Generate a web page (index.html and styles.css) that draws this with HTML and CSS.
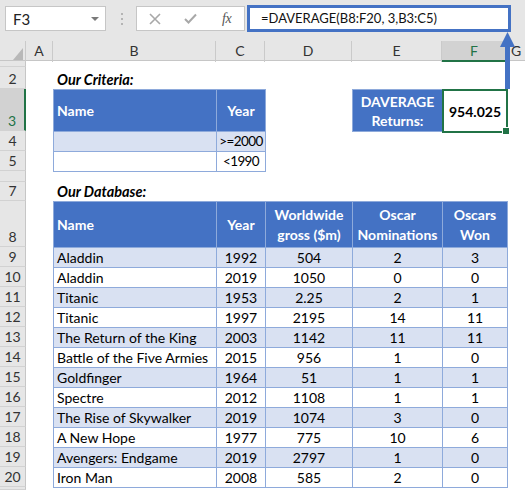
FILE: index.html
```html
<!DOCTYPE html>
<html>
<head>
<meta charset="utf-8">
<link rel="stylesheet" href="styles.css">
</head>
<body>
<div class="app">
  <div class="toolbar">
    <div class="namebox"><span>F3</span><span class="dd"></span></div>
    <div class="dots"><i></i><i></i><i></i></div>
    <div class="fxbox">
      <svg class="ico-x" width="12" height="12" viewBox="0 0 12 12"><path d="M1 1 L11 11 M11 1 L1 11" stroke="#a8a8a8" stroke-width="1.6" fill="none"/></svg>
      <svg class="ico-v" width="13" height="11" viewBox="0 0 13 11"><path d="M1 6 L4.5 9.5 L12 1.5" stroke="#a8a8a8" stroke-width="2" fill="none"/></svg>
      <span class="fx">fx</span>
    </div>
    <div class="formula">=DAVERAGE(B8:F20, 3,B3:C5)</div>
  </div>

  <div class="colhead">
    <div class="ch corner"><span class="tri"></span></div>
    <div class="ch">A</div>
    <div class="ch">B</div>
    <div class="ch">C</div>
    <div class="ch">D</div>
    <div class="ch">E</div>
    <div class="ch sel">F</div>
    <div class="ch last">G</div>
  </div>

  <div class="sheet">
    <div class="rh"></div>
    <div class="rh">2</div>
    <div class="rh selr">3</div>
    <div class="rh">4</div>
    <div class="rh">5</div>
    <div class="rh"></div>
    <div class="rh">7</div>
    <div class="rh">8</div>
    <div class="rh">9</div>
    <div class="rh">10</div>
    <div class="rh">11</div>
    <div class="rh">12</div>
    <div class="rh">13</div>
    <div class="rh">14</div>
    <div class="rh">15</div>
    <div class="rh">16</div>
    <div class="rh">17</div>
    <div class="rh">18</div>
    <div class="rh">19</div>
    <div class="rh">20</div>
    <div class="rh"></div>

    <div class="label crit-label">Our Criteria:</div>

    <div class="crit">
      <div class="hd left">Name</div>
      <div class="hd">Year</div>
      <div class="c band"></div>
      <div class="c band num tight">&gt;=2000</div>
      <div class="c"></div>
      <div class="c num tight">&lt;1990</div>
    </div>

    <div class="dav-label">DAVERAGE<br>Returns:</div>
    <div class="dav-result">954.025<span class="handle"></span></div>

    <div class="label db-label">Our Database:</div>

    <div class="db">
      <div class="hd left">Name</div>
      <div class="hd">Year</div>
      <div class="hd">Worldwide<br>gross ($m)</div>
      <div class="hd">Oscar<br>Nominations</div>
      <div class="hd">Oscars<br>Won</div>

      <div class="r band"><div class="c">Aladdin</div><div class="c num">1992</div><div class="c num">504</div><div class="c num">2</div><div class="c num">3</div></div>
      <div class="r"><div class="c">Aladdin</div><div class="c num">2019</div><div class="c num">1050</div><div class="c num">0</div><div class="c num">0</div></div>
      <div class="r band"><div class="c">Titanic</div><div class="c num">1953</div><div class="c num">2.25</div><div class="c num">2</div><div class="c num">1</div></div>
      <div class="r"><div class="c">Titanic</div><div class="c num">1997</div><div class="c num">2195</div><div class="c num">14</div><div class="c num">11</div></div>
      <div class="r band"><div class="c">The Return of the King</div><div class="c num">2003</div><div class="c num">1142</div><div class="c num">11</div><div class="c num">11</div></div>
      <div class="r"><div class="c">Battle of the Five Armies</div><div class="c num">2015</div><div class="c num">956</div><div class="c num">1</div><div class="c num">0</div></div>
      <div class="r band"><div class="c">Goldfinger</div><div class="c num">1964</div><div class="c num">51</div><div class="c num">1</div><div class="c num">1</div></div>
      <div class="r"><div class="c">Spectre</div><div class="c num">2012</div><div class="c num">1108</div><div class="c num">1</div><div class="c num">1</div></div>
      <div class="r band"><div class="c">The Rise of Skywalker</div><div class="c num">2019</div><div class="c num">1074</div><div class="c num">3</div><div class="c num">0</div></div>
      <div class="r"><div class="c">A New Hope</div><div class="c num">1977</div><div class="c num">775</div><div class="c num">10</div><div class="c num">6</div></div>
      <div class="r band"><div class="c">Avengers: Endgame</div><div class="c num">2019</div><div class="c num">2797</div><div class="c num">1</div><div class="c num">0</div></div>
      <div class="r"><div class="c">Iron Man</div><div class="c num">2008</div><div class="c num">585</div><div class="c num">2</div><div class="c num">0</div></div>
    </div>
  </div>

  <svg class="arrow" width="15" height="57" viewBox="0 0 15 57">
    <polygon points="7.5,0 0,15 15,15" fill="#4472c4"/>
    <rect x="5" y="14" width="5" height="43" fill="#4472c4"/>
  </svg>
</div>
</body>
</html>
```

FILE: styles.css
```css
html, body {
  margin: 0;
  padding: 0;
  background: #ffffff;
}

body {
  font-family: Lato, "Liberation Sans", sans-serif;
  color: #000;
}

.app {
  position: relative;
  width: 525px;
  height: 490px;
  overflow: hidden;
  background: #fff;
}

/* ---------- toolbar ---------- */
.toolbar {
  height: 41px;
  background: #e6e6e6;
  display: flex;
  align-items: flex-start;
}

.namebox {
  box-sizing: border-box;
  margin: 6px 0 0 5px;
  width: 101px;
  height: 25px;
  background: #fff;
  border: 1px solid #c6c6c6;
  display: flex;
  align-items: center;
  justify-content: space-between;
  padding: 0 6px 0 7px;
  font-size: 15px;
  color: #222;
}

.dd {
  width: 0;
  height: 0;
  border-left: 4px solid transparent;
  border-right: 4px solid transparent;
  border-top: 4px solid #7a7a7a;
}

.dots {
  margin: 13px 0 0 15px;
  display: flex;
  flex-direction: column;
  gap: 3px;
}

.dots i {
  display: block;
  width: 2px;
  height: 2px;
  background: #b4b4b4;
}

.fxbox {
  box-sizing: border-box;
  margin: 6px 0 0 13px;
  width: 109px;
  height: 25px;
  background: #fff;
  border: 1px solid #c6c6c6;
  display: flex;
  align-items: center;
  padding-left: 12px;
}

.ico-x { margin-right: 23px; }
.ico-v { margin-right: 25px; }

.fx {
  font-family: "Liberation Serif", serif;
  font-style: italic;
  font-size: 14px;
  color: #555;
  letter-spacing: -0.5px;
}

.formula {
  box-sizing: border-box;
  margin: 5px 0 0 2px;
  width: 264px;
  height: 27px;
  border: 3px solid #4472c4;
  background: #fff;
  padding-left: 11px;
  font-size: 13px;
  line-height: 20px;
  color: #111;
}

/* ---------- column headers ---------- */
.colhead {
  display: grid;
  grid-template-columns: 26px 27px 163px 49px 87px 90px 65px 1fr;
  height: 20px;
  background: #e6e6e6;
  box-sizing: border-box;
  border-bottom: 1px solid #c6c6c6;
}

.ch {
  box-sizing: border-box;
  border-right: 1px solid #cacaca;
  text-align: center;
  font-size: 14px;
  line-height: 19px;
  color: #333;
}

.ch.last { border-right: none; }

.corner {
  position: relative;
}

.tri {
  position: absolute;
  right: 2px;
  bottom: 2px;
  width: 0;
  height: 0;
  border-left: 10px solid transparent;
  border-bottom: 12px solid #b8b8b8;
}

.ch.sel {
  background: #d2d2d2;
  color: #217346;
  border-bottom: 2px solid #217346;
}

/* ---------- sheet ---------- */
.sheet {
  display: grid;
  grid-template-columns: 26px 27px 163px 49px 87px 90px 65px 1fr;
  grid-template-rows: 6px 22px 42px 20px 20px 11px 19px 46px repeat(12, 20px) 1fr;
  height: 429px;
}

.rh {
  grid-column: 1;
  box-sizing: border-box;
  background: #e6e6e6;
  border-right: 1px solid #c6c6c6;
  border-bottom: 1px solid #d2d2d2;
  display: flex;
  align-items: flex-end;
  justify-content: center;
  overflow: hidden;
  font-size: 14px;
  line-height: 18px;
  padding-bottom: 0;
  color: #333;
}

.rh.selr {
  background: #d2d2d2;
  color: #217346;
  border-right: 2px solid #217346;
}

.label {
  font-weight: bold;
  font-style: italic;
  font-size: 14.5px;
  padding-left: 4px;
  display: flex;
  align-items: flex-end;
  line-height: 18px;
  padding-bottom: 0;
  white-space: nowrap;
}

.crit-label { grid-column: 3; grid-row: 2; }
.db-label { grid-column: 3; grid-row: 7; }

/* tables */
.crit, .db {
  display: grid;
  background: #8eaadb;
  gap: 1px;
  padding: 1px;
  box-sizing: border-box;
  align-self: start;
  justify-self: start;
  font-size: 14px;
}

.crit {
  grid-column: 3 / 5;
  grid-row: 3 / 6;
  width: 213px;
  height: 83px;
  grid-template-columns: 162px 48px;
  grid-template-rows: 41px 19px 19px;
}

.db {
  grid-column: 3 / 8;
  grid-row: 8 / 21;
  width: 455px;
  height: 287px;
  grid-template-columns: 162px 48px 86px 89px 64px;
  grid-template-rows: 45px repeat(12, 19px);
}

.hd {
  background: #4472c4;
  color: #fff;
  font-weight: bold;
  display: flex;
  align-items: center;
  justify-content: center;
  text-align: center;
  line-height: 20px;
}

.hd.left {
  justify-content: flex-start;
  padding-left: 3px;
}

.r { display: contents; }

.c {
  background: #fff;
  display: flex;
  align-items: center;
  padding-left: 3px;
  line-height: 19px;
  white-space: nowrap;
  overflow: hidden;
}

.c.band, .r.band > .c {
  background: #d9e1f2;
}

.c.num {
  justify-content: center;
  padding-left: 0;
}

.c.tight {
  letter-spacing: -0.6px;
  font-size: 13.5px;
}

.dav-label {
  grid-column: 6;
  grid-row: 3;
  box-sizing: border-box;
  width: 91px;
  height: 43px;
  background: #4472c4;
  border: 1px solid #8eaadb;
  color: #fff;
  font-weight: bold;
  font-size: 14px;
  line-height: 19px;
  text-align: center;
  display: flex;
  align-items: center;
  justify-content: center;
}

.dav-result {
  grid-column: 7;
  grid-row: 3;
  position: relative;
  box-sizing: border-box;
  width: 66px;
  height: 44px;
  border: 2px solid #217346;
  background: #fff;
  font-weight: bold;
  font-size: 14px;
  display: flex;
  align-items: center;
  justify-content: center;
}

.handle {
  position: absolute;
  right: -4px;
  bottom: -4px;
  width: 6px;
  height: 6px;
  background: #217346;
  border: 1px solid #fff;
}

.arrow {
  position: absolute;
  left: 500px;
  top: 32px;
}
```
